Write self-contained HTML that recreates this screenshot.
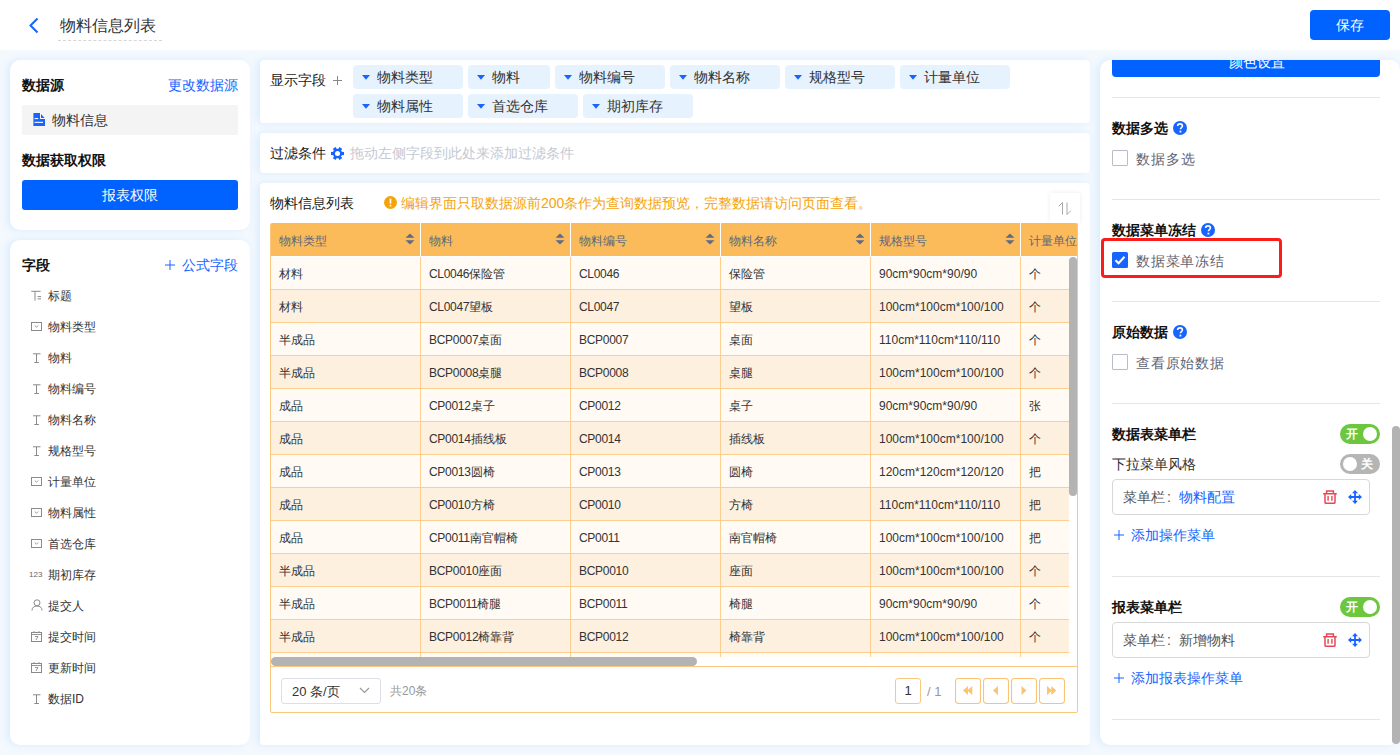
<!DOCTYPE html>
<html><head><meta charset="utf-8">
<style>
*{box-sizing:border-box;margin:0;padding:0}
html,body{width:1400px;height:755px;overflow:hidden}
body{font-family:"Liberation Sans",sans-serif;background:#f4f9fe;position:relative;color:#333;font-size:14px}
.abs{position:absolute}
.hdr{left:0;top:0;width:1400px;height:50px;background:#fff}
.panel{position:absolute;background:#fff;box-shadow:-3px 0 8px rgba(0,125,250,0.11)}
.t{position:absolute;white-space:nowrap;line-height:1}
.b{font-weight:bold;color:#111}
.blue{color:#1764ff}
.tbl{position:absolute;left:270px;top:223px;width:808px;height:444px;overflow:hidden;border-left:1px solid #fbc77e;border-right:1px solid #fbc77e;border-radius:2px 2px 0 0}
.th{position:absolute;top:0;height:33px;background:#fbbb5b;color:#5c677d;font-size:12px}
.th .tx{position:absolute;left:9px;top:12px;line-height:1;white-space:nowrap}
.sort{position:absolute;left:135px;top:10px}
.tr{position:absolute;left:0;width:798px;height:33px;border-bottom:1px solid #fbcf8f}
.td{position:absolute;top:0;height:32px;font-size:12px;color:#333}
.td .tx{position:absolute;left:9px;top:11px;line-height:1;white-space:nowrap}
.vl{position:absolute;width:1px;background:#fbcf8f}
.lt{letter-spacing:-0.3px}
.sp .lt{letter-spacing:0}
</style></head><body>
<div class="abs hdr">
  <svg class="abs" style="left:28px;top:17px" width="12" height="17" viewBox="0 0 12 17"><path d="M9.5 1.5 L2.5 8.5 L9.5 15.5" fill="none" stroke="#1764ff" stroke-width="2"/></svg>
  <div class="t" style="left:60px;top:18px;font-size:16px;color:#333">物料信息列表</div>
  <div class="abs" style="left:58px;top:40px;width:104px;border-top:1px dashed #d6d6d6"></div>
  <div class="abs" style="left:1310px;top:10px;width:80px;height:30px;background:#0062ff;border-radius:4px;color:#fff;font-size:14px;line-height:30px;text-align:center">保存</div>
</div>
<div class="panel" style="left:10px;top:60px;width:240px;height:170px;border-radius:10px"></div>
<div class="panel" style="left:10px;top:240px;width:240px;height:505px;border-radius:10px"></div>
<div class="panel" style="left:260px;top:60px;width:830px;height:63px;border-radius:4px"></div>
<div class="panel" style="left:260px;top:133px;width:830px;height:40px;border-radius:4px"></div>
<div class="panel" style="left:260px;top:183px;width:830px;height:562px;border-radius:4px"></div>
<div class="panel" style="left:1100px;top:60px;width:300px;height:685px;border-radius:10px"></div>

<div class="t b" style="left:22px;top:78px;font-size:14px">数据源</div>
<div class="t blue" style="left:168px;top:78px;font-size:14px">更改数据源</div>
<div class="abs" style="left:22px;top:105px;width:216px;height:30px;background:#f4f4f5;border-radius:2px"></div>
<svg class="abs" style="left:33px;top:113px" width="12" height="13" viewBox="0 0 12 13"><path d="M0.4 0H7V6H12V13H0.4Z M8 1V5H11.5Z" fill="#1764ff"/><rect x="1.6" y="5" width="3.6" height="1.1" fill="#fff"/><rect x="1.6" y="8.8" width="8.4" height="1.1" fill="#fff"/></svg>
<div class="t" style="left:52px;top:113px;font-size:14px;color:#333">物料信息</div>
<div class="t b" style="left:22px;top:153px;font-size:14px">数据获取权限</div>
<div class="abs" style="left:22px;top:180px;width:216px;height:30px;background:#0062ff;border-radius:3px;color:#fff;font-size:14px;line-height:30px;text-align:center">报表权限</div>
<div class="t b" style="left:22px;top:258px;font-size:14px">字段</div>
<svg class="abs" style="left:165px;top:260px" width="10" height="10" viewBox="0 0 10 10"><path d="M5.0 0V10M0 5.0H10" stroke="#1764ff" stroke-width="1"/></svg>
<div class="t blue" style="left:182px;top:258px;font-size:14px">公式字段</div>
<svg class="abs" style="left:31px;top:289px" width="11" height="13" viewBox="0 0 11 13"><path d="M0.3 2.3H9.6M4 2.3V11.6M6.6 7.6H10M6.6 9.9H10" stroke="#8a8a8a" stroke-width="1" fill="none"/></svg><div class="t" style="left:48px;top:290px;font-size:12px;color:#333">标题</div>
<svg class="abs" style="left:31px;top:322px" width="11" height="9" viewBox="0 0 11 9"><rect x="0.5" y="0.5" width="10" height="8" fill="none" stroke="#8a8a8a" stroke-width="1"/><path d="M3.8 3.5L5.5 5.2L7.2 3.5" stroke="#8a8a8a" fill="none" stroke-width="0.9"/></svg><div class="t" style="left:48px;top:321px;font-size:12px;color:#333">物料类型</div>
<svg class="abs" style="left:31px;top:351px" width="11" height="13" viewBox="0 0 11 13"><path d="M2 2.8H9.5M5.5 2.8V11M3.3 11.5H7.9" stroke="#8a8a8a" stroke-width="1" fill="none"/></svg><div class="t" style="left:48px;top:352px;font-size:12px;color:#333">物料</div>
<svg class="abs" style="left:31px;top:382px" width="11" height="13" viewBox="0 0 11 13"><path d="M2 2.8H9.5M5.5 2.8V11M3.3 11.5H7.9" stroke="#8a8a8a" stroke-width="1" fill="none"/></svg><div class="t" style="left:48px;top:383px;font-size:12px;color:#333">物料编号</div>
<svg class="abs" style="left:31px;top:413px" width="11" height="13" viewBox="0 0 11 13"><path d="M2 2.8H9.5M5.5 2.8V11M3.3 11.5H7.9" stroke="#8a8a8a" stroke-width="1" fill="none"/></svg><div class="t" style="left:48px;top:414px;font-size:12px;color:#333">物料名称</div>
<svg class="abs" style="left:31px;top:444px" width="11" height="13" viewBox="0 0 11 13"><path d="M2 2.8H9.5M5.5 2.8V11M3.3 11.5H7.9" stroke="#8a8a8a" stroke-width="1" fill="none"/></svg><div class="t" style="left:48px;top:445px;font-size:12px;color:#333">规格型号</div>
<svg class="abs" style="left:31px;top:477px" width="11" height="9" viewBox="0 0 11 9"><rect x="0.5" y="0.5" width="10" height="8" fill="none" stroke="#8a8a8a" stroke-width="1"/><path d="M3.8 3.5L5.5 5.2L7.2 3.5" stroke="#8a8a8a" fill="none" stroke-width="0.9"/></svg><div class="t" style="left:48px;top:476px;font-size:12px;color:#333">计量单位</div>
<svg class="abs" style="left:31px;top:508px" width="11" height="9" viewBox="0 0 11 9"><rect x="0.5" y="0.5" width="10" height="8" fill="none" stroke="#8a8a8a" stroke-width="1"/><path d="M3.8 3.5L5.5 5.2L7.2 3.5" stroke="#8a8a8a" fill="none" stroke-width="0.9"/></svg><div class="t" style="left:48px;top:507px;font-size:12px;color:#333">物料属性</div>
<svg class="abs" style="left:31px;top:539px" width="11" height="9" viewBox="0 0 11 9"><rect x="0.5" y="0.5" width="10" height="8" fill="none" stroke="#8a8a8a" stroke-width="1"/><path d="M3.8 3.5L5.5 5.2L7.2 3.5" stroke="#8a8a8a" fill="none" stroke-width="0.9"/></svg><div class="t" style="left:48px;top:538px;font-size:12px;color:#333">首选仓库</div>
<div class="t" style="left:29px;top:571px;font-size:8px;color:#666">123</div><div class="t" style="left:48px;top:569px;font-size:12px;color:#333">期初库存</div>
<svg class="abs" style="left:31px;top:599px" width="12" height="12" viewBox="0 0 12 12"><circle cx="6" cy="3.8" r="3" fill="none" stroke="#8a8a8a"/><path d="M1 11.5C1 8.5 3 7 6 7S11 8.5 11 11.5" fill="none" stroke="#8a8a8a"/></svg><div class="t" style="left:48px;top:600px;font-size:12px;color:#333">提交人</div>
<svg class="abs" style="left:31px;top:631px" width="11" height="11" viewBox="0 0 11 11"><rect x="0.5" y="1.5" width="10" height="9" fill="none" stroke="#8a8a8a"/><path d="M0.5 3.5H10.5M3 0V2M8 0V2M4 5.5H7L5 9" stroke="#8a8a8a" fill="none" stroke-width="0.9"/></svg><div class="t" style="left:48px;top:631px;font-size:12px;color:#333">提交时间</div>
<svg class="abs" style="left:31px;top:662px" width="11" height="11" viewBox="0 0 11 11"><rect x="0.5" y="1.5" width="10" height="9" fill="none" stroke="#8a8a8a"/><path d="M0.5 3.5H10.5M3 0V2M8 0V2M4 5.5H7L5 9" stroke="#8a8a8a" fill="none" stroke-width="0.9"/></svg><div class="t" style="left:48px;top:662px;font-size:12px;color:#333">更新时间</div>
<svg class="abs" style="left:31px;top:692px" width="11" height="13" viewBox="0 0 11 13"><path d="M2 2.8H9.5M5.5 2.8V11M3.3 11.5H7.9" stroke="#8a8a8a" stroke-width="1" fill="none"/></svg><div class="t" style="left:48px;top:693px;font-size:12px;color:#333">数据ID</div>
<div class="t" style="left:270px;top:73px;font-size:14px;color:#1a1a1a">显示字段</div>
<svg class="abs" style="left:333px;top:76px" width="9" height="9" viewBox="0 0 9 9"><path d="M4.5 0V9M0 4.5H9" stroke="#888" stroke-width="1"/></svg><div class="abs" style="left:353px;top:65px;width:110px;height:24px;background:#e6f2fe;border-radius:4px"><svg class="abs" style="left:9px;top:10px" width="8" height="5" viewBox="0 0 8 5"><path d="M0 0H8L4 4.8Z" fill="#1764ff"/></svg><div class="t" style="left:24px;top:5px;font-size:14px;color:#333">物料类型</div></div>
<div class="abs" style="left:468px;top:65px;width:82px;height:24px;background:#e6f2fe;border-radius:4px"><svg class="abs" style="left:9px;top:10px" width="8" height="5" viewBox="0 0 8 5"><path d="M0 0H8L4 4.8Z" fill="#1764ff"/></svg><div class="t" style="left:24px;top:5px;font-size:14px;color:#333">物料</div></div>
<div class="abs" style="left:555px;top:65px;width:110px;height:24px;background:#e6f2fe;border-radius:4px"><svg class="abs" style="left:9px;top:10px" width="8" height="5" viewBox="0 0 8 5"><path d="M0 0H8L4 4.8Z" fill="#1764ff"/></svg><div class="t" style="left:24px;top:5px;font-size:14px;color:#333">物料编号</div></div>
<div class="abs" style="left:670px;top:65px;width:110px;height:24px;background:#e6f2fe;border-radius:4px"><svg class="abs" style="left:9px;top:10px" width="8" height="5" viewBox="0 0 8 5"><path d="M0 0H8L4 4.8Z" fill="#1764ff"/></svg><div class="t" style="left:24px;top:5px;font-size:14px;color:#333">物料名称</div></div>
<div class="abs" style="left:785px;top:65px;width:110px;height:24px;background:#e6f2fe;border-radius:4px"><svg class="abs" style="left:9px;top:10px" width="8" height="5" viewBox="0 0 8 5"><path d="M0 0H8L4 4.8Z" fill="#1764ff"/></svg><div class="t" style="left:24px;top:5px;font-size:14px;color:#333">规格型号</div></div>
<div class="abs" style="left:900px;top:65px;width:110px;height:24px;background:#e6f2fe;border-radius:4px"><svg class="abs" style="left:9px;top:10px" width="8" height="5" viewBox="0 0 8 5"><path d="M0 0H8L4 4.8Z" fill="#1764ff"/></svg><div class="t" style="left:24px;top:5px;font-size:14px;color:#333">计量单位</div></div>
<div class="abs" style="left:353px;top:94px;width:110px;height:24px;background:#e6f2fe;border-radius:4px"><svg class="abs" style="left:9px;top:10px" width="8" height="5" viewBox="0 0 8 5"><path d="M0 0H8L4 4.8Z" fill="#1764ff"/></svg><div class="t" style="left:24px;top:5px;font-size:14px;color:#333">物料属性</div></div>
<div class="abs" style="left:468px;top:94px;width:110px;height:24px;background:#e6f2fe;border-radius:4px"><svg class="abs" style="left:9px;top:10px" width="8" height="5" viewBox="0 0 8 5"><path d="M0 0H8L4 4.8Z" fill="#1764ff"/></svg><div class="t" style="left:24px;top:5px;font-size:14px;color:#333">首选仓库</div></div>
<div class="abs" style="left:583px;top:94px;width:110px;height:24px;background:#e6f2fe;border-radius:4px"><svg class="abs" style="left:9px;top:10px" width="8" height="5" viewBox="0 0 8 5"><path d="M0 0H8L4 4.8Z" fill="#1764ff"/></svg><div class="t" style="left:24px;top:5px;font-size:14px;color:#333">期初库存</div></div>
<div class="t" style="left:270px;top:146px;font-size:14px;color:#1a1a1a">过滤条件</div>
<svg class="abs" style="left:331px;top:147px" width="13" height="13" viewBox="-6.5 -6.5 13 13"><g fill="#1764ff"><rect x="-1.6" y="-6.5" width="3.2" height="3" transform="rotate(30)"/><rect x="-1.6" y="-6.5" width="3.2" height="3" transform="rotate(90)"/><rect x="-1.6" y="-6.5" width="3.2" height="3" transform="rotate(150)"/><rect x="-1.6" y="-6.5" width="3.2" height="3" transform="rotate(210)"/><rect x="-1.6" y="-6.5" width="3.2" height="3" transform="rotate(270)"/><rect x="-1.6" y="-6.5" width="3.2" height="3" transform="rotate(330)"/><circle r="4.7"/></g><circle r="2.5" fill="#fff"/></svg>
<div class="t" style="left:350px;top:146px;font-size:14px;color:#c4c9d2">拖动左侧字段到此处来添加过滤条件</div>
<div class="t" style="left:270px;top:196px;font-size:14px;color:#1a1a1a">物料信息列表</div>
<svg class="abs" style="left:384px;top:196px" width="13" height="13" viewBox="0 0 13 13"><circle cx="6.5" cy="6.5" r="6.5" fill="#f5a30c"/><rect x="5.7" y="2.6" width="1.6" height="5" fill="#fff"/><rect x="5.7" y="8.8" width="1.6" height="1.6" fill="#fff"/></svg>
<div class="t" style="left:401px;top:196px;font-size:14px;color:#f5a30c">编辑界面只取数据源前200条作为查询数据预览，完整数据请访问页面查看。</div>
<div class="abs" style="left:1050px;top:193px;width:30px;height:30px;background:#fff;box-shadow:0 0 4px rgba(60,60,120,0.10)"></div>
<svg class="abs" style="left:1057px;top:201px" width="16" height="15" viewBox="0 0 16 15"><path d="M5.5 1.5V13.5M5.5 1.5L1.8 5.2M10 1.5V13.5M10 13.5L13.7 9.8" stroke="#a8a8a8" stroke-width="1" fill="none"/></svg>
<div class="tbl">
<div class="th" style="left:-1px;width:150px"><div class="tx">物料类型</div><svg class="sort" width="10" height="12" viewBox="0 0 10 12"><path d="M5 0.5L9.5 4.8H0.5Z M0.5 7.2H9.5L5 11.5Z" fill="#5b6b87"/></svg></div><div class="th" style="left:149px;width:150px"><div class="tx">物料</div><svg class="sort" width="10" height="12" viewBox="0 0 10 12"><path d="M5 0.5L9.5 4.8H0.5Z M0.5 7.2H9.5L5 11.5Z" fill="#5b6b87"/></svg></div><div class="th" style="left:299px;width:150px"><div class="tx">物料编号</div><svg class="sort" width="10" height="12" viewBox="0 0 10 12"><path d="M5 0.5L9.5 4.8H0.5Z M0.5 7.2H9.5L5 11.5Z" fill="#5b6b87"/></svg></div><div class="th" style="left:449px;width:150px"><div class="tx">物料名称</div><svg class="sort" width="10" height="12" viewBox="0 0 10 12"><path d="M5 0.5L9.5 4.8H0.5Z M0.5 7.2H9.5L5 11.5Z" fill="#5b6b87"/></svg></div><div class="th" style="left:599px;width:150px"><div class="tx">规格型号</div><svg class="sort" width="10" height="12" viewBox="0 0 10 12"><path d="M5 0.5L9.5 4.8H0.5Z M0.5 7.2H9.5L5 11.5Z" fill="#5b6b87"/></svg></div><div class="th" style="left:749px;width:70px"><div class="tx">计量单位</div></div><div class="abs" style="left:149px;top:0;width:1px;height:33px;background:#fff"></div><div class="abs" style="left:299px;top:0;width:1px;height:33px;background:#fff"></div><div class="abs" style="left:449px;top:0;width:1px;height:33px;background:#fff"></div><div class="abs" style="left:599px;top:0;width:1px;height:33px;background:#fff"></div><div class="abs" style="left:749px;top:0;width:1px;height:33px;background:#fff"></div><div class="abs" style="left:0;top:33px;width:808px;height:1px;background:#fff"></div><div class="tr" style="top:34px;background:#fffbf4"><div class="td" style="left:-1px;width:150px"><div class="tx">材料</div></div><div class="td" style="left:149px;width:150px"><div class="tx"><span class="lt">CL0046</span>保险管</div></div><div class="td" style="left:299px;width:150px"><div class="tx"><span class="lt">CL0046</span></div></div><div class="td" style="left:449px;width:150px"><div class="tx">保险管</div></div><div class="td sp" style="left:599px;width:150px"><div class="tx"><span class="lt">90cm*90cm*90/90</span></div></div><div class="td" style="left:749px;width:150px"><div class="tx">个</div></div></div>
<div class="tr" style="top:67px;background:#fdf0df"><div class="td" style="left:-1px;width:150px"><div class="tx">材料</div></div><div class="td" style="left:149px;width:150px"><div class="tx"><span class="lt">CL0047</span>望板</div></div><div class="td" style="left:299px;width:150px"><div class="tx"><span class="lt">CL0047</span></div></div><div class="td" style="left:449px;width:150px"><div class="tx">望板</div></div><div class="td sp" style="left:599px;width:150px"><div class="tx"><span class="lt">100cm*100cm*100/100</span></div></div><div class="td" style="left:749px;width:150px"><div class="tx">个</div></div></div>
<div class="tr" style="top:100px;background:#fffbf4"><div class="td" style="left:-1px;width:150px"><div class="tx">半成品</div></div><div class="td" style="left:149px;width:150px"><div class="tx"><span class="lt">BCP0007</span>桌面</div></div><div class="td" style="left:299px;width:150px"><div class="tx"><span class="lt">BCP0007</span></div></div><div class="td" style="left:449px;width:150px"><div class="tx">桌面</div></div><div class="td sp" style="left:599px;width:150px"><div class="tx"><span class="lt">110cm*110cm*110/110</span></div></div><div class="td" style="left:749px;width:150px"><div class="tx">个</div></div></div>
<div class="tr" style="top:133px;background:#fdf0df"><div class="td" style="left:-1px;width:150px"><div class="tx">半成品</div></div><div class="td" style="left:149px;width:150px"><div class="tx"><span class="lt">BCP0008</span>桌腿</div></div><div class="td" style="left:299px;width:150px"><div class="tx"><span class="lt">BCP0008</span></div></div><div class="td" style="left:449px;width:150px"><div class="tx">桌腿</div></div><div class="td sp" style="left:599px;width:150px"><div class="tx"><span class="lt">100cm*100cm*100/100</span></div></div><div class="td" style="left:749px;width:150px"><div class="tx">个</div></div></div>
<div class="tr" style="top:166px;background:#fffbf4"><div class="td" style="left:-1px;width:150px"><div class="tx">成品</div></div><div class="td" style="left:149px;width:150px"><div class="tx"><span class="lt">CP0012</span>桌子</div></div><div class="td" style="left:299px;width:150px"><div class="tx"><span class="lt">CP0012</span></div></div><div class="td" style="left:449px;width:150px"><div class="tx">桌子</div></div><div class="td sp" style="left:599px;width:150px"><div class="tx"><span class="lt">90cm*90cm*90/90</span></div></div><div class="td" style="left:749px;width:150px"><div class="tx">张</div></div></div>
<div class="tr" style="top:199px;background:#fdf0df"><div class="td" style="left:-1px;width:150px"><div class="tx">成品</div></div><div class="td" style="left:149px;width:150px"><div class="tx"><span class="lt">CP0014</span>插线板</div></div><div class="td" style="left:299px;width:150px"><div class="tx"><span class="lt">CP0014</span></div></div><div class="td" style="left:449px;width:150px"><div class="tx">插线板</div></div><div class="td sp" style="left:599px;width:150px"><div class="tx"><span class="lt">100cm*100cm*100/100</span></div></div><div class="td" style="left:749px;width:150px"><div class="tx">个</div></div></div>
<div class="tr" style="top:232px;background:#fffbf4"><div class="td" style="left:-1px;width:150px"><div class="tx">成品</div></div><div class="td" style="left:149px;width:150px"><div class="tx"><span class="lt">CP0013</span>圆椅</div></div><div class="td" style="left:299px;width:150px"><div class="tx"><span class="lt">CP0013</span></div></div><div class="td" style="left:449px;width:150px"><div class="tx">圆椅</div></div><div class="td sp" style="left:599px;width:150px"><div class="tx"><span class="lt">120cm*120cm*120/120</span></div></div><div class="td" style="left:749px;width:150px"><div class="tx">把</div></div></div>
<div class="tr" style="top:265px;background:#fdf0df"><div class="td" style="left:-1px;width:150px"><div class="tx">成品</div></div><div class="td" style="left:149px;width:150px"><div class="tx"><span class="lt">CP0010</span>方椅</div></div><div class="td" style="left:299px;width:150px"><div class="tx"><span class="lt">CP0010</span></div></div><div class="td" style="left:449px;width:150px"><div class="tx">方椅</div></div><div class="td sp" style="left:599px;width:150px"><div class="tx"><span class="lt">110cm*110cm*110/110</span></div></div><div class="td" style="left:749px;width:150px"><div class="tx">把</div></div></div>
<div class="tr" style="top:298px;background:#fffbf4"><div class="td" style="left:-1px;width:150px"><div class="tx">成品</div></div><div class="td" style="left:149px;width:150px"><div class="tx"><span class="lt">CP0011</span>南官帽椅</div></div><div class="td" style="left:299px;width:150px"><div class="tx"><span class="lt">CP0011</span></div></div><div class="td" style="left:449px;width:150px"><div class="tx">南官帽椅</div></div><div class="td sp" style="left:599px;width:150px"><div class="tx"><span class="lt">100cm*100cm*100/100</span></div></div><div class="td" style="left:749px;width:150px"><div class="tx">把</div></div></div>
<div class="tr" style="top:331px;background:#fdf0df"><div class="td" style="left:-1px;width:150px"><div class="tx">半成品</div></div><div class="td" style="left:149px;width:150px"><div class="tx"><span class="lt">BCP0010</span>座面</div></div><div class="td" style="left:299px;width:150px"><div class="tx"><span class="lt">BCP0010</span></div></div><div class="td" style="left:449px;width:150px"><div class="tx">座面</div></div><div class="td sp" style="left:599px;width:150px"><div class="tx"><span class="lt">100cm*100cm*100/100</span></div></div><div class="td" style="left:749px;width:150px"><div class="tx">个</div></div></div>
<div class="tr" style="top:364px;background:#fffbf4"><div class="td" style="left:-1px;width:150px"><div class="tx">半成品</div></div><div class="td" style="left:149px;width:150px"><div class="tx"><span class="lt">BCP0011</span>椅腿</div></div><div class="td" style="left:299px;width:150px"><div class="tx"><span class="lt">BCP0011</span></div></div><div class="td" style="left:449px;width:150px"><div class="tx">椅腿</div></div><div class="td sp" style="left:599px;width:150px"><div class="tx"><span class="lt">90cm*90cm*90/90</span></div></div><div class="td" style="left:749px;width:150px"><div class="tx">个</div></div></div>
<div class="tr" style="top:397px;background:#fdf0df"><div class="td" style="left:-1px;width:150px"><div class="tx">半成品</div></div><div class="td" style="left:149px;width:150px"><div class="tx"><span class="lt">BCP0012</span>椅靠背</div></div><div class="td" style="left:299px;width:150px"><div class="tx"><span class="lt">BCP0012</span></div></div><div class="td" style="left:449px;width:150px"><div class="tx">椅靠背</div></div><div class="td sp" style="left:599px;width:150px"><div class="tx"><span class="lt">100cm*100cm*100/100</span></div></div><div class="td" style="left:749px;width:150px"><div class="tx">个</div></div></div>
<div class="tr" style="top:430px;background:#fffbf4"><div class="td" style="left:-1px;width:150px"><div class="tx">半成品</div></div><div class="td" style="left:149px;width:150px"><div class="tx"><span class="lt">BCP0013</span></div></div><div class="td" style="left:299px;width:150px"><div class="tx"><span class="lt">BCP0013</span></div></div><div class="td" style="left:449px;width:150px"><div class="tx"></div></div><div class="td sp" style="left:599px;width:150px"><div class="tx"></div></div><div class="td" style="left:749px;width:150px"><div class="tx"></div></div></div>
<div class="vl" style="left:149px;top:34px;height:400px"></div><div class="vl" style="left:299px;top:34px;height:400px"></div><div class="vl" style="left:449px;top:34px;height:400px"></div><div class="vl" style="left:599px;top:34px;height:400px"></div><div class="vl" style="left:749px;top:34px;height:400px"></div>
<div class="abs" style="left:0;top:434px;width:808px;height:10px;background:#fff"></div>
<div class="abs" style="left:798px;top:34px;width:9px;height:410px;background:#fff"></div>
<div class="abs" style="left:798px;top:34px;width:8px;height:239px;background:#b3b3b3;border-radius:4px"></div>
<div class="abs" style="left:0px;top:434px;width:426px;height:9px;background:#b3b3b3;border-radius:5px"></div>
</div>
<div class="abs" style="left:270px;top:666px;width:808px;height:47px;border:1px solid #fbc77e;border-radius:0 0 2px 2px"></div>
<div class="abs" style="left:281px;top:678px;width:100px;height:26px;border:1px solid #dcdfe6;border-radius:3px"></div>
<div class="t" style="left:292px;top:685px;font-size:13px;color:#333">20 条/页</div>
<svg class="abs" style="left:359px;top:687px" width="11" height="7" viewBox="0 0 11 7"><path d="M1 1L5.5 5.5L10 1" stroke="#999" stroke-width="1.2" fill="none"/></svg>
<div class="t" style="left:390px;top:685px;font-size:12px;color:#999">共20条</div>
<div class="abs" style="left:895px;top:678px;width:26px;height:26px;border:1px solid #fbc77e;border-radius:3px;font-size:13px;color:#333;text-align:center;line-height:24px">1</div>
<div class="t" style="left:927px;top:685px;font-size:13px;color:#999">/ 1</div>
<svg class="abs" style="left:955px;top:678px" width="26" height="26" viewBox="0 0 26 26"><rect x="0.5" y="0.5" width="25" height="25" rx="3" fill="#fff" stroke="#fbc372" stroke-width="1.1"/><path d="M8 12.5L13 8V17Z M12.3 12.5L17.3 8V17Z" fill="#fbc372"/></svg><svg class="abs" style="left:983px;top:678px" width="26" height="26" viewBox="0 0 26 26"><rect x="0.5" y="0.5" width="25" height="25" rx="3" fill="#fff" stroke="#fbc372" stroke-width="1.1"/><path d="M10 12.5L15 8V17Z" fill="#fbc372"/></svg><svg class="abs" style="left:1011px;top:678px" width="26" height="26" viewBox="0 0 26 26"><rect x="0.5" y="0.5" width="25" height="25" rx="3" fill="#fff" stroke="#fbc372" stroke-width="1.1"/><path d="M15.5 12.5L10.5 8V17Z" fill="#fbc372"/></svg><svg class="abs" style="left:1039px;top:678px" width="26" height="26" viewBox="0 0 26 26"><rect x="0.5" y="0.5" width="25" height="25" rx="3" fill="#fff" stroke="#fbc372" stroke-width="1.1"/><path d="M13 12.5L8 8V17Z M17.3 12.5L12.3 8V17Z" fill="#fbc372"/></svg>
<div class="abs" style="left:1100px;top:60px;width:300px;height:685px;overflow:hidden;border-radius:10px">
  <div class="abs" style="left:12px;top:-20px;width:268px;height:37px;background:#0062ff;border-radius:4px;overflow:hidden"><div class="t" style="left:117px;top:15px;font-size:14px;color:#fff">颜色设置</div></div>
</div>
<div class="abs" style="left:1112px;top:97px;width:268px;height:1px;background:#e6e6e6"></div>
<div class="t b" style="left:1112px;top:121px;font-size:14px">数据多选</div>
<svg class="abs" style="left:1173px;top:121px" width="14" height="14" viewBox="0.5 0.5 14 14"><circle cx="7.5" cy="7.5" r="7" fill="#1764ff"/><path d="M5.1 5.6C5.1 4.2 6.2 3.4 7.5 3.4S9.9 4.2 9.9 5.5C9.9 7 7.9 7.1 7.9 8.8" fill="none" stroke="#fff" stroke-width="1.6"/><rect x="7" y="10.2" width="1.8" height="1.8" fill="#fff"/></svg><div class="abs" style="left:1112px;top:150px;width:16px;height:16px;border:1px solid #b8bcc8;border-radius:1px;background:#fff"></div>
<div class="t" style="left:1136px;top:152px;font-size:14px;color:#5f6573;letter-spacing:1px">数据多选</div>
<div class="abs" style="left:1112px;top:199px;width:268px;height:1px;background:#e6e6e6"></div>
<div class="t b" style="left:1112px;top:223px;font-size:14px">数据菜单冻结</div>
<svg class="abs" style="left:1201px;top:223px" width="14" height="14" viewBox="0.5 0.5 14 14"><circle cx="7.5" cy="7.5" r="7" fill="#1764ff"/><path d="M5.1 5.6C5.1 4.2 6.2 3.4 7.5 3.4S9.9 4.2 9.9 5.5C9.9 7 7.9 7.1 7.9 8.8" fill="none" stroke="#fff" stroke-width="1.6"/><rect x="7" y="10.2" width="1.8" height="1.8" fill="#fff"/></svg>
<div class="abs" style="left:1101px;top:238px;width:181px;height:40px;border:3px solid #fb1c1c;border-radius:4px"></div>
<svg class="abs" style="left:1112px;top:252px" width="16" height="16" viewBox="0 0 16 16"><rect width="16" height="16" rx="1.5" fill="#1764ff"/><path d="M3.5 8.2L6.6 11.2L12.5 4.8" stroke="#fff" stroke-width="2" fill="none"/></svg>
<div class="t" style="left:1136px;top:254px;font-size:14px;color:#5f6573;letter-spacing:0.8px">数据菜单冻结</div>
<div class="abs" style="left:1112px;top:301px;width:268px;height:1px;background:#e6e6e6"></div>
<div class="t b" style="left:1112px;top:325px;font-size:14px">原始数据</div>
<svg class="abs" style="left:1173px;top:325px" width="14" height="14" viewBox="0.5 0.5 14 14"><circle cx="7.5" cy="7.5" r="7" fill="#1764ff"/><path d="M5.1 5.6C5.1 4.2 6.2 3.4 7.5 3.4S9.9 4.2 9.9 5.5C9.9 7 7.9 7.1 7.9 8.8" fill="none" stroke="#fff" stroke-width="1.6"/><rect x="7" y="10.2" width="1.8" height="1.8" fill="#fff"/></svg><div class="abs" style="left:1112px;top:354px;width:16px;height:16px;border:1px solid #b8bcc8;border-radius:1px;background:#fff"></div>
<div class="t" style="left:1136px;top:356px;font-size:14px;color:#5f6573;letter-spacing:0.8px">查看原始数据</div>
<div class="abs" style="left:1112px;top:403px;width:268px;height:1px;background:#e6e6e6"></div>
<div class="t b" style="left:1112px;top:427px;font-size:14px">数据表菜单栏</div>
<div class="abs" style="left:1340px;top:424px;width:40px;height:20px;border-radius:10px;background:#6dc73e"><div class="t" style="left:6px;top:4px;font-size:12px;color:#fff;font-weight:bold">开</div><div class="abs" style="left:23px;top:3px;width:14px;height:14px;border-radius:7px;background:#fff"></div></div>
<div class="t" style="left:1112px;top:457px;font-size:14px;color:#333">下拉菜单风格</div>
<div class="abs" style="left:1340px;top:454px;width:40px;height:20px;border-radius:10px;background:#b5b5b5"><div class="abs" style="left:3px;top:3px;width:14px;height:14px;border-radius:7px;background:#fff"></div><div class="t" style="left:21px;top:4px;font-size:12px;color:#fff;font-weight:bold">关</div></div>
<div class="abs" style="left:1112px;top:479px;width:258px;height:36px;border:1px solid #d8d8d8;border-radius:4px"></div>
<div class="t" style="left:1123px;top:490px;font-size:14px;color:#555">菜单栏<span style="display:inline-block;width:14px;padding-left:2px">:</span><span style="color:#1764ff">物料配置</span></div>
<svg class="abs" style="left:1323px;top:490px" width="14" height="14" viewBox="0 0 14 14"><path d="M3.6 3.4V1.1H10.4V3.4M0.2 3.8H13.8M2 4.2V12.3Q2 13.3 3 13.3H11Q12 13.3 12 12.3V4.2" fill="none" stroke="#e84855" stroke-width="1.5"/><path d="M5.1 6V10.8M8.9 6V10.8" stroke="#e84855" stroke-width="1.4"/></svg><svg class="abs" style="left:1348px;top:490px" width="14" height="14" viewBox="0 0 14 14"><path d="M7 2V12M2 7H12" stroke="#1764ff" stroke-width="1.8"/><path d="M7 0L10 3.2H4Z M7 14L10 10.8H4Z M0 7L3.2 4V10Z M14 7L10.8 4V10Z" fill="#1764ff"/></svg><svg class="abs" style="left:1114px;top:530px" width="10" height="10" viewBox="0 0 10 10"><path d="M5.0 0V10M0 5.0H10" stroke="#1764ff" stroke-width="1"/></svg>
<div class="t blue" style="left:1131px;top:528px;font-size:14px">添加操作菜单</div>
<div class="abs" style="left:1112px;top:576px;width:268px;height:1px;background:#e6e6e6"></div>
<div class="t b" style="left:1112px;top:600px;font-size:14px">报表菜单栏</div>
<div class="abs" style="left:1340px;top:597px;width:40px;height:20px;border-radius:10px;background:#6dc73e"><div class="t" style="left:6px;top:4px;font-size:12px;color:#fff;font-weight:bold">开</div><div class="abs" style="left:23px;top:3px;width:14px;height:14px;border-radius:7px;background:#fff"></div></div>
<div class="abs" style="left:1112px;top:622px;width:258px;height:36px;border:1px solid #d8d8d8;border-radius:4px"></div>
<div class="t" style="left:1123px;top:633px;font-size:14px;color:#555">菜单栏<span style="display:inline-block;width:14px;padding-left:2px">:</span>新增物料</div>
<svg class="abs" style="left:1323px;top:633px" width="14" height="14" viewBox="0 0 14 14"><path d="M3.6 3.4V1.1H10.4V3.4M0.2 3.8H13.8M2 4.2V12.3Q2 13.3 3 13.3H11Q12 13.3 12 12.3V4.2" fill="none" stroke="#e84855" stroke-width="1.5"/><path d="M5.1 6V10.8M8.9 6V10.8" stroke="#e84855" stroke-width="1.4"/></svg><svg class="abs" style="left:1348px;top:633px" width="14" height="14" viewBox="0 0 14 14"><path d="M7 2V12M2 7H12" stroke="#1764ff" stroke-width="1.8"/><path d="M7 0L10 3.2H4Z M7 14L10 10.8H4Z M0 7L3.2 4V10Z M14 7L10.8 4V10Z" fill="#1764ff"/></svg><svg class="abs" style="left:1114px;top:673px" width="10" height="10" viewBox="0 0 10 10"><path d="M5.0 0V10M0 5.0H10" stroke="#1764ff" stroke-width="1"/></svg>
<div class="t blue" style="left:1131px;top:671px;font-size:14px">添加报表操作菜单</div>
<div class="abs" style="left:1112px;top:719px;width:268px;height:1px;background:#e6e6e6"></div>
<div class="abs" style="left:1392px;top:426px;width:8px;height:318px;background:#b3b3b3;border-radius:4px"></div>
</body></html>
